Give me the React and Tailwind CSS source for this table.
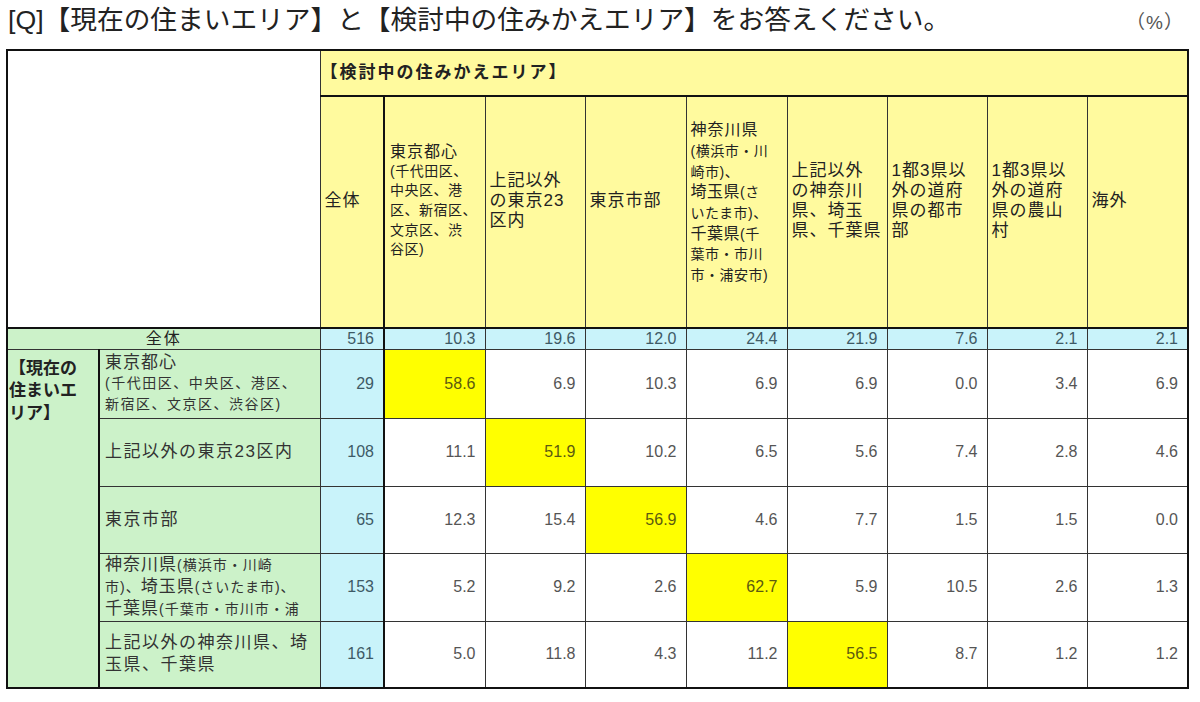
import React from "react";

const FONT = { fontFamily: '"Liberation Sans", "Noto Sans CJK JP", sans-serif' };

// column header lines, pre-broken like the spreadsheet
const columns = [
    ["上記以外", "の東京23", "区内"],
    ["東京市部"],
    null, // 神奈川・埼玉・千葉 has mixed sizes, drawn below
    ["上記以外", "の神奈川", "県、埼玉", "県、千葉県"],
    ["1都3県以", "外の道府", "県の都市", "部"],
    ["1都3県以", "外の道府", "県の農山", "村"],
    ["海外"],
];

const totals = ["10.3", "19.6", "12.0", "24.4", "21.9", "7.6", "2.1", "2.1"];

const rows = [
    { n: "29", h: "h-[69px]", v: ["58.6", "6.9", "10.3", "6.9", "6.9", "0.0", "3.4", "6.9"] },
    { n: "108", h: "h-[68px]", v: ["11.1", "51.9", "10.2", "6.5", "5.6", "7.4", "2.8", "4.6"] },
    { n: "65", h: "h-[67px]", v: ["12.3", "15.4", "56.9", "4.6", "7.7", "1.5", "1.5", "0.0"] },
    { n: "153", h: "h-[68px]", v: ["5.2", "9.2", "2.6", "62.7", "5.9", "10.5", "2.6", "1.3"] },
    { n: "161", h: "h-[67px]", v: ["5.0", "11.8", "4.3", "11.2", "56.5", "8.7", "1.2", "1.2"] },
];

function RowLabel({ index }) {
    if (index === 0) {
        return (
            <div className="leading-[21px] whitespace-nowrap">
                <div className="text-[17px] tracking-[1px]">東京都心</div>
                <div className="text-[14px] tracking-[1.5px]">(千代田区、中央区、港区、</div>
                <div className="text-[14px] tracking-[1.5px]">新宿区、文京区、渋谷区)</div>
            </div>
        );
    }
    if (index === 1) return <div className="text-[17px] tracking-[1.5px] whitespace-nowrap">上記以外の東京23区内</div>;
    if (index === 2) return <div className="text-[17px] tracking-[1.5px] whitespace-nowrap">東京市部</div>;
    if (index === 3) {
        return (
            <div className="leading-[21px] whitespace-nowrap overflow-hidden">
                <div>
                    <span className="text-[17px] tracking-[1px]">神奈川県</span>
                    <span className="text-[14px] tracking-[1px]">(横浜市・川崎</span>
                </div>
                <div className="text-[14px] tracking-[1px]">
                    市)、<span className="text-[17px]">埼玉県</span>(さいたま市)、
                </div>
                <div>
                    <span className="text-[17px] tracking-[1px]">千葉県</span>
                    <span className="text-[14px] tracking-[1px]">(千葉市・市川市・浦</span>
                </div>
            </div>
        );
    }
    return (
        <div className="text-[17px] tracking-[1.5px] leading-[22px] whitespace-nowrap">
            上記以外の神奈川県、埼<br />玉県、千葉県
        </div>
    );
}

export default function App() {
    return (
        <div className="w-[1200px] h-[702px] bg-white overflow-hidden text-[#222]" style={FONT}>
            <div className="h-[49px] flex items-start justify-between pl-[8px] pr-[16px]">
                <div className="text-[26.7px] leading-[40px] whitespace-nowrap">
                    [Q]【現在の住まいエリア】と【検討中の住みかえエリア】をお答えください。
                </div>
                <div className="text-[19px] leading-[46px] text-[#555] tracking-[1px]">（%）</div>
            </div>

            <div className="pl-[6px]">
                <table className="border-collapse table-fixed border-2 border-[#111] w-[1181px]">
                    <colgroup>
                        <col className="w-[92px]" />
                        <col className="w-[221px]" />
                        <col className="w-[64px]" />
                        <col className="w-[101px]" />
                        <col className="w-[100px]" />
                        <col className="w-[101px]" />
                        <col className="w-[101px]" />
                        <col className="w-[100px]" />
                        <col className="w-[100px]" />
                        <col className="w-[100px]" />
                        <col className="w-[101px]" />
                    </colgroup>
                    <tbody>
                        <tr className="h-[46px]">
                            <td colSpan={2} rowSpan={2} className="bg-white border border-[#333]"></td>
                            <td colSpan={9} className="bg-[#fffa9e] border border-[#333] border-b-2 border-b-[#111] pl-0 text-[17px] font-bold tracking-[2px]">
                                【検討中の住みかえエリア】
                            </td>
                        </tr>
                        <tr className="h-[232px]">
                            <td className="bg-[#fffa9e] border border-[#333] border-r-2 border-r-[#111] align-middle pb-[22px] pl-[4px] text-[17px] tracking-[1px]">
                                全体
                            </td>
                            <td className="bg-[#fffa9e] border border-[#333] align-middle pb-[22px] pl-[5px] whitespace-nowrap leading-[19.7px]">
                                <div className="text-[16px] tracking-[1px]">東京都心</div>
                                <div className="text-[14px] tracking-[0.5px]">(千代田区、</div>
                                <div className="text-[14px] tracking-[0.5px]">中央区、港</div>
                                <div className="text-[14px] tracking-[0.5px]">区、新宿区、</div>
                                <div className="text-[14px] tracking-[0.5px]">文京区、渋</div>
                                <div className="text-[14px] tracking-[0.5px]">谷区)</div>
                            </td>
                            {columns.map((lines, i) =>
                                lines ? (
                                    <td key={i} className="bg-[#fffa9e] border border-[#333] align-middle pb-[22px] pl-[4px] whitespace-nowrap text-[17px] tracking-[1px] leading-[20px]">
                                        {lines.map((l) => (
                                            <div key={l}>{l}</div>
                                        ))}
                                    </td>
                                ) : (
                                    <td key={i} className="bg-[#fffa9e] border border-[#333] align-middle pb-[18px] pl-[4px] whitespace-nowrap leading-[20.7px]">
                                        <div className="text-[16px] tracking-[1px]">神奈川県</div>
                                        <div className="text-[14px] tracking-[0.5px]">(横浜市・川</div>
                                        <div className="text-[14px] tracking-[0.5px]">崎市)、</div>
                                        <div className="text-[16px] tracking-[0.5px]">埼玉県<span className="text-[14px]">(さ</span></div>
                                        <div className="text-[14px] tracking-[0.5px]">いたま市)、</div>
                                        <div className="text-[16px] tracking-[0.5px]">千葉県<span className="text-[14px]">(千</span></div>
                                        <div className="text-[14px] tracking-[0.5px]">葉市・市川</div>
                                        <div className="text-[14px] tracking-[0.5px]">市・浦安市)</div>
                                    </td>
                                )
                            )}
                        </tr>

                        <tr className="h-[21px]">
                            <td colSpan={2} className="bg-[#ccf2c9] border border-[#333] border-t-2 border-t-[#111] text-center text-[16px] leading-[18px] tracking-[2px]">
                                全体
                            </td>
                            <td className="bg-[#c9f3fa] border border-[#333] border-t-2 border-t-[#111] border-r-2 border-r-[#111] text-right pr-[9px] text-[16px] leading-[18px] text-[#3e5a66]">
                                516
                            </td>
                            {totals.map((t, i) => (
                                <td key={i} className="bg-[#c9f3fa] border border-[#333] border-t-2 border-t-[#111] text-right pr-[9px] text-[16px] leading-[18px] text-[#3e5a66]">
                                    {t}
                                </td>
                            ))}
                        </tr>

                        {rows.map((r, ri) => (
                            <tr key={ri} className={r.h}>
                                {ri === 0 && (
                                    <td rowSpan={5} className="bg-[#ccf2c9] border border-[#333] border-r-2 border-r-[#111] align-top pt-[8px] pl-[1px] text-[17px] font-bold leading-[22.5px] whitespace-nowrap">
                                        【現在の<br />住まいエ<br />リア】
                                    </td>
                                )}
                                <td className="bg-[#ccf2c9] border border-[#333] pl-[5px] align-middle text-[#333] overflow-hidden">
                                    <RowLabel index={ri} />
                                </td>
                                <td className="bg-[#c9f3fa] border border-[#333] border-r-2 border-r-[#111] text-right pr-[9px] text-[16px] text-[#3e5a66]">
                                    {r.n}
                                </td>
                                {r.v.map((v, ci) => (
                                    <td
                                        key={ci}
                                        className={
                                            ci === ri
                                                ? "bg-[#ffff00] border border-[#333] text-right pr-[9px] text-[16px] text-[#5c5a10]"
                                                : "bg-white border border-[#333] text-right pr-[9px] text-[16px] text-[#555]"
                                        }
                                    >
                                        {v}
                                    </td>
                                ))}
                            </tr>
                        ))}
                    </tbody>
                </table>
            </div>
        </div>
    );
}
